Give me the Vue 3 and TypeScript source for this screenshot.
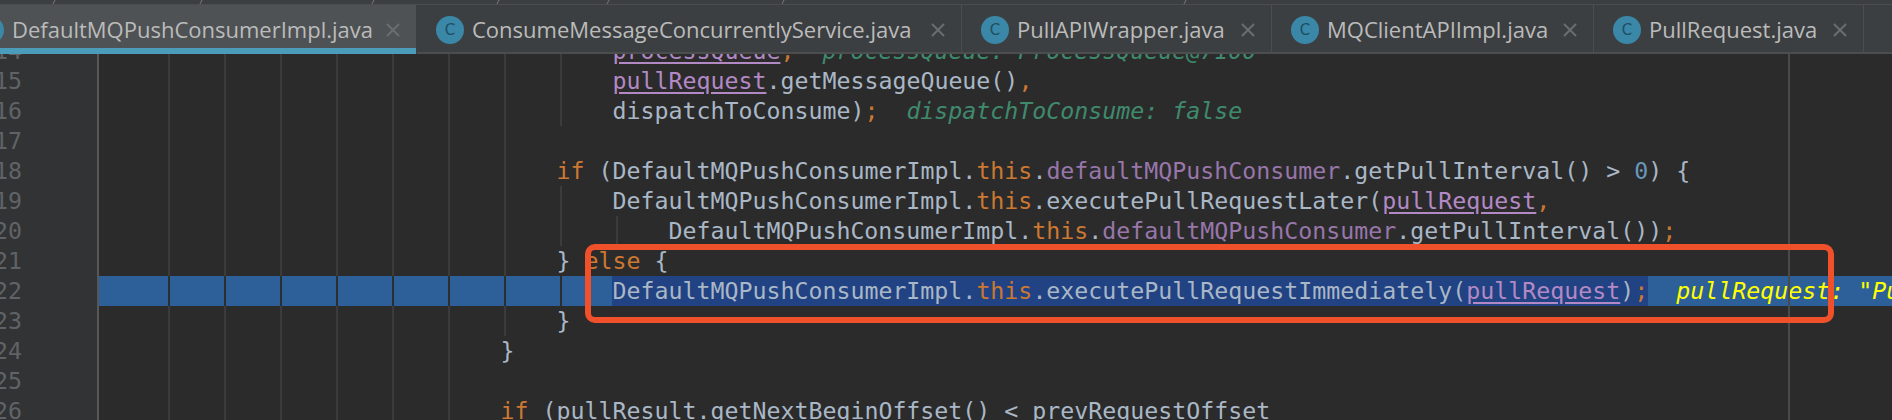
<script setup lang="ts">
type Seg = { t: string; c?: string }
type Line = { n: number; guides: number; segs: Seg[]; current?: boolean }

const tabs = [
  { name: 'DefaultMQPushConsumerImpl.java', width: 416, active: true },
  { name: 'ConsumeMessageConcurrentlyService.java', width: 545, active: false },
  { name: 'PullAPIWrapper.java', width: 310, active: false },
  { name: 'MQClientAPIImpl.java', width: 322, active: false },
  { name: 'PullRequest.java', width: 270, active: false },
]

const crumbs = [53, 200, 372, 497, 607, 782, 1184]

const pad = (n: number) => ' '.repeat(n)
const impl = 'DefaultMQPushConsumerImpl.'

const lines: Line[] = [
  { n: 14, guides: 8, segs: [{ t: pad(36) }, { t: 'processQueue', c: 'var' }, { t: ',', c: 'kw' }, { t: '  ' }, { t: 'processQueue: ProcessQueue@7100', c: 'hint' }] },
  { n: 15, guides: 8, segs: [{ t: pad(36) }, { t: 'pullRequest', c: 'var' }, { t: '.getMessageQueue()' }, { t: ',', c: 'kw' }] },
  { n: 16, guides: 8, segs: [{ t: pad(36) + 'dispatchToConsume)' }, { t: ';', c: 'kw' }, { t: '  ' }, { t: 'dispatchToConsume: false', c: 'hint' }] },
  { n: 17, guides: 7, segs: [] },
  { n: 18, guides: 7, segs: [{ t: pad(32) }, { t: 'if', c: 'kw' }, { t: ' (' + impl }, { t: 'this', c: 'kw' }, { t: '.' }, { t: 'defaultMQPushConsumer', c: 'field' }, { t: '.getPullInterval() > ' }, { t: '0', c: 'lit' }, { t: ') {' }] },
  { n: 19, guides: 8, segs: [{ t: pad(36) + impl }, { t: 'this', c: 'kw' }, { t: '.executePullRequestLater(' }, { t: 'pullRequest', c: 'var' }, { t: ',', c: 'kw' }] },
  { n: 20, guides: 9, segs: [{ t: pad(40) + impl }, { t: 'this', c: 'kw' }, { t: '.' }, { t: 'defaultMQPushConsumer', c: 'field' }, { t: '.getPullInterval())' }, { t: ';', c: 'kw' }] },
  { n: 21, guides: 7, segs: [{ t: pad(32) + '} ' }, { t: 'else', c: 'kw' }, { t: ' {' }] },
  { n: 22, guides: 8, current: true, segs: [] },
  { n: 23, guides: 7, segs: [{ t: pad(32) + '}' }] },
  { n: 24, guides: 6, segs: [{ t: pad(28) + '}' }] },
  { n: 25, guides: 6, segs: [] },
  { n: 26, guides: 6, segs: [{ t: pad(28) }, { t: 'if', c: 'kw' }, { t: ' (pullResult.getNextBeginOffset() < prevRequestOffset' }] },
]
</script>

<template>
  <div class="ide">
    <svg class="crumbs" width="1892" height="4" aria-hidden="true">
      <line v-for="x in crumbs" :key="x" :x1="x" y1="4" :x2="x + 2" y2="0" />
    </svg>

    <div class="tabs">
      <div
        v-for="tab in tabs"
        :key="tab.name"
        class="tab"
        :class="{ active: tab.active }"
        :style="{ flexBasis: tab.width + 'px' }"
      >
        <span class="icon">C</span>
        <span class="name">{{ tab.name }}</span>
        <svg class="close" width="14" height="14" viewBox="0 0 14 14" aria-hidden="true">
          <path d="M1 1 L13 13 M13 1 L1 13" />
        </svg>
      </div>
      <div class="tab-rest"></div>
    </div>

    <div class="editor">
      <div class="lines">
        <div v-for="line in lines" :key="line.n" class="row" :class="{ current: line.current }">
          <div class="gutter"><span class="lineno">{{ line.n }}</span></div>
          <div class="code">
            <span class="guides" :style="{ width: line.guides * 56 + 'px' }"></span>
            <template v-if="line.current">
              <span class="token">{{ pad(36) }}</span>
              <span class="sel"><span>{{ impl }}</span><span class="kw">this</span><span>.executePullRequestImmediately(</span><span class="var">pullRequest</span><span>)</span><span class="kw">;</span></span>
              <span class="token">{{ pad(2) }}</span>
              <span class="token value">pullRequest: "PullRequest [consumerGroup=</span>
            </template>
            <template v-else>
              <span v-for="(seg, i) in line.segs" :key="i" class="token" :class="seg.c">{{ seg.t }}</span>
            </template>
          </div>
        </div>
      </div>
      <div class="margin-line"></div>
      <div class="callout"></div>
    </div>
  </div>
</template>

<style scoped>
.ide {
  width: 1892px;
  height: 420px;
  overflow: hidden;
  background: #2b2b2b;
  display: flex;
  flex-direction: column;
}
.crumbs {
  display: block;
  flex: none;
  background: #3c3f41;
  border-bottom: 1px solid #4b4d4f;
  box-sizing: content-box;
}
.crumbs line {
  stroke: #77797b;
  stroke-width: 1;
}
.tabs {
  flex: none;
  height: 49px;
  display: flex;
  background: #3c3f41;
}
.tab {
  flex: 0 0 auto;
  box-sizing: border-box;
  display: flex;
  align-items: center;
  gap: 8px;
  padding: 3px 16px 0 19px;
  border-right: 1px solid #4b4d4f;
  border-bottom: 2px solid #4b4d4f;
  color: #bbbbbb;
  font-family: "Open Sans", sans-serif;
  font-size: 22px;
  white-space: nowrap;
}
.tab.active {
  background: #4e5254;
  border-right: 0;
  border-bottom: 6px solid #4a9cba;
  padding: 7px 16px 0 0;
  margin-right: 1px;
}
.tab-rest {
  flex: 1;
  border-bottom: 2px solid #4b4d4f;
}
.name {
  margin-bottom: 3px;
}
.icon {
  flex: none;
  width: 28px;
  height: 28px;
  border-radius: 50%;
  background: #3a87a8;
  color: #1f4f63;
  font-family: "DejaVu Sans", sans-serif;
  font-size: 15px;
  line-height: 28px;
  text-align: center;
}
.active .icon {
  margin-left: -24px;
}
.close {
  flex: none;
  margin-left: auto;
}
.close path {
  stroke: #6a6d6f;
  stroke-width: 2;
  fill: none;
}
.editor {
  flex: 1;
  min-height: 0;
  position: relative;
  overflow: hidden;
}
.lines {
  margin-top: -18px;
}
.row {
  display: flex;
  height: 30px;
  font-family: "DejaVu Sans Mono", monospace;
  font-size: 23.25px;
  line-height: 30px;
  color: #a9b7c6;
  white-space: pre;
}
.gutter {
  flex: 0 0 99px;
  box-sizing: border-box;
  background: #313335;
  border-right: 2px solid #555759;
  color: #606366;
}
.lineno {
  display: flex;
  justify-content: flex-end;
  width: 22px;
}
.code {
  flex: 1;
  min-width: 0;
  display: flex;
  position: relative;
  overflow: hidden;
  padding-left: 9.5px;
}
.row.current .code {
  background: #2d5f99;
}
.guides {
  position: absolute;
  top: 0;
  bottom: 0;
  left: 15px;
  background: repeating-linear-gradient(to right, transparent 0, transparent 54px, #3b3b3b 54px, #3b3b3b 56px);
}
.row.current .guides {
  background: repeating-linear-gradient(to right, transparent 0, transparent 54px, #2d2d2e 54px, #2d2d2e 56px);
}
.token,
.sel {
  flex: none;
  position: relative;
}
.kw { color: #cc7832; }
.field { color: #9876aa; }
.lit { color: #6897bb; }
.var {
  color: #b389c5;
  text-decoration: underline;
  text-underline-offset: 3px;
}
.hint {
  color: #3f8a6d;
  font-style: italic;
}
.sel {
  background: #214283;
}
.value {
  color: #ffff00;
  font-style: italic;
}
.margin-line {
  position: absolute;
  top: 0;
  bottom: 0;
  left: 1788px;
  width: 2px;
  background: #4a4a4a;
}
.callout {
  position: absolute;
  left: 585px;
  top: 190px;
  width: 1249px;
  height: 79px;
  box-sizing: border-box;
  border: 6px solid #f0512b;
  border-radius: 10px;
}
</style>

<style>
html, body {
  margin: 0;
  background: #2b2b2b;
}
</style>
